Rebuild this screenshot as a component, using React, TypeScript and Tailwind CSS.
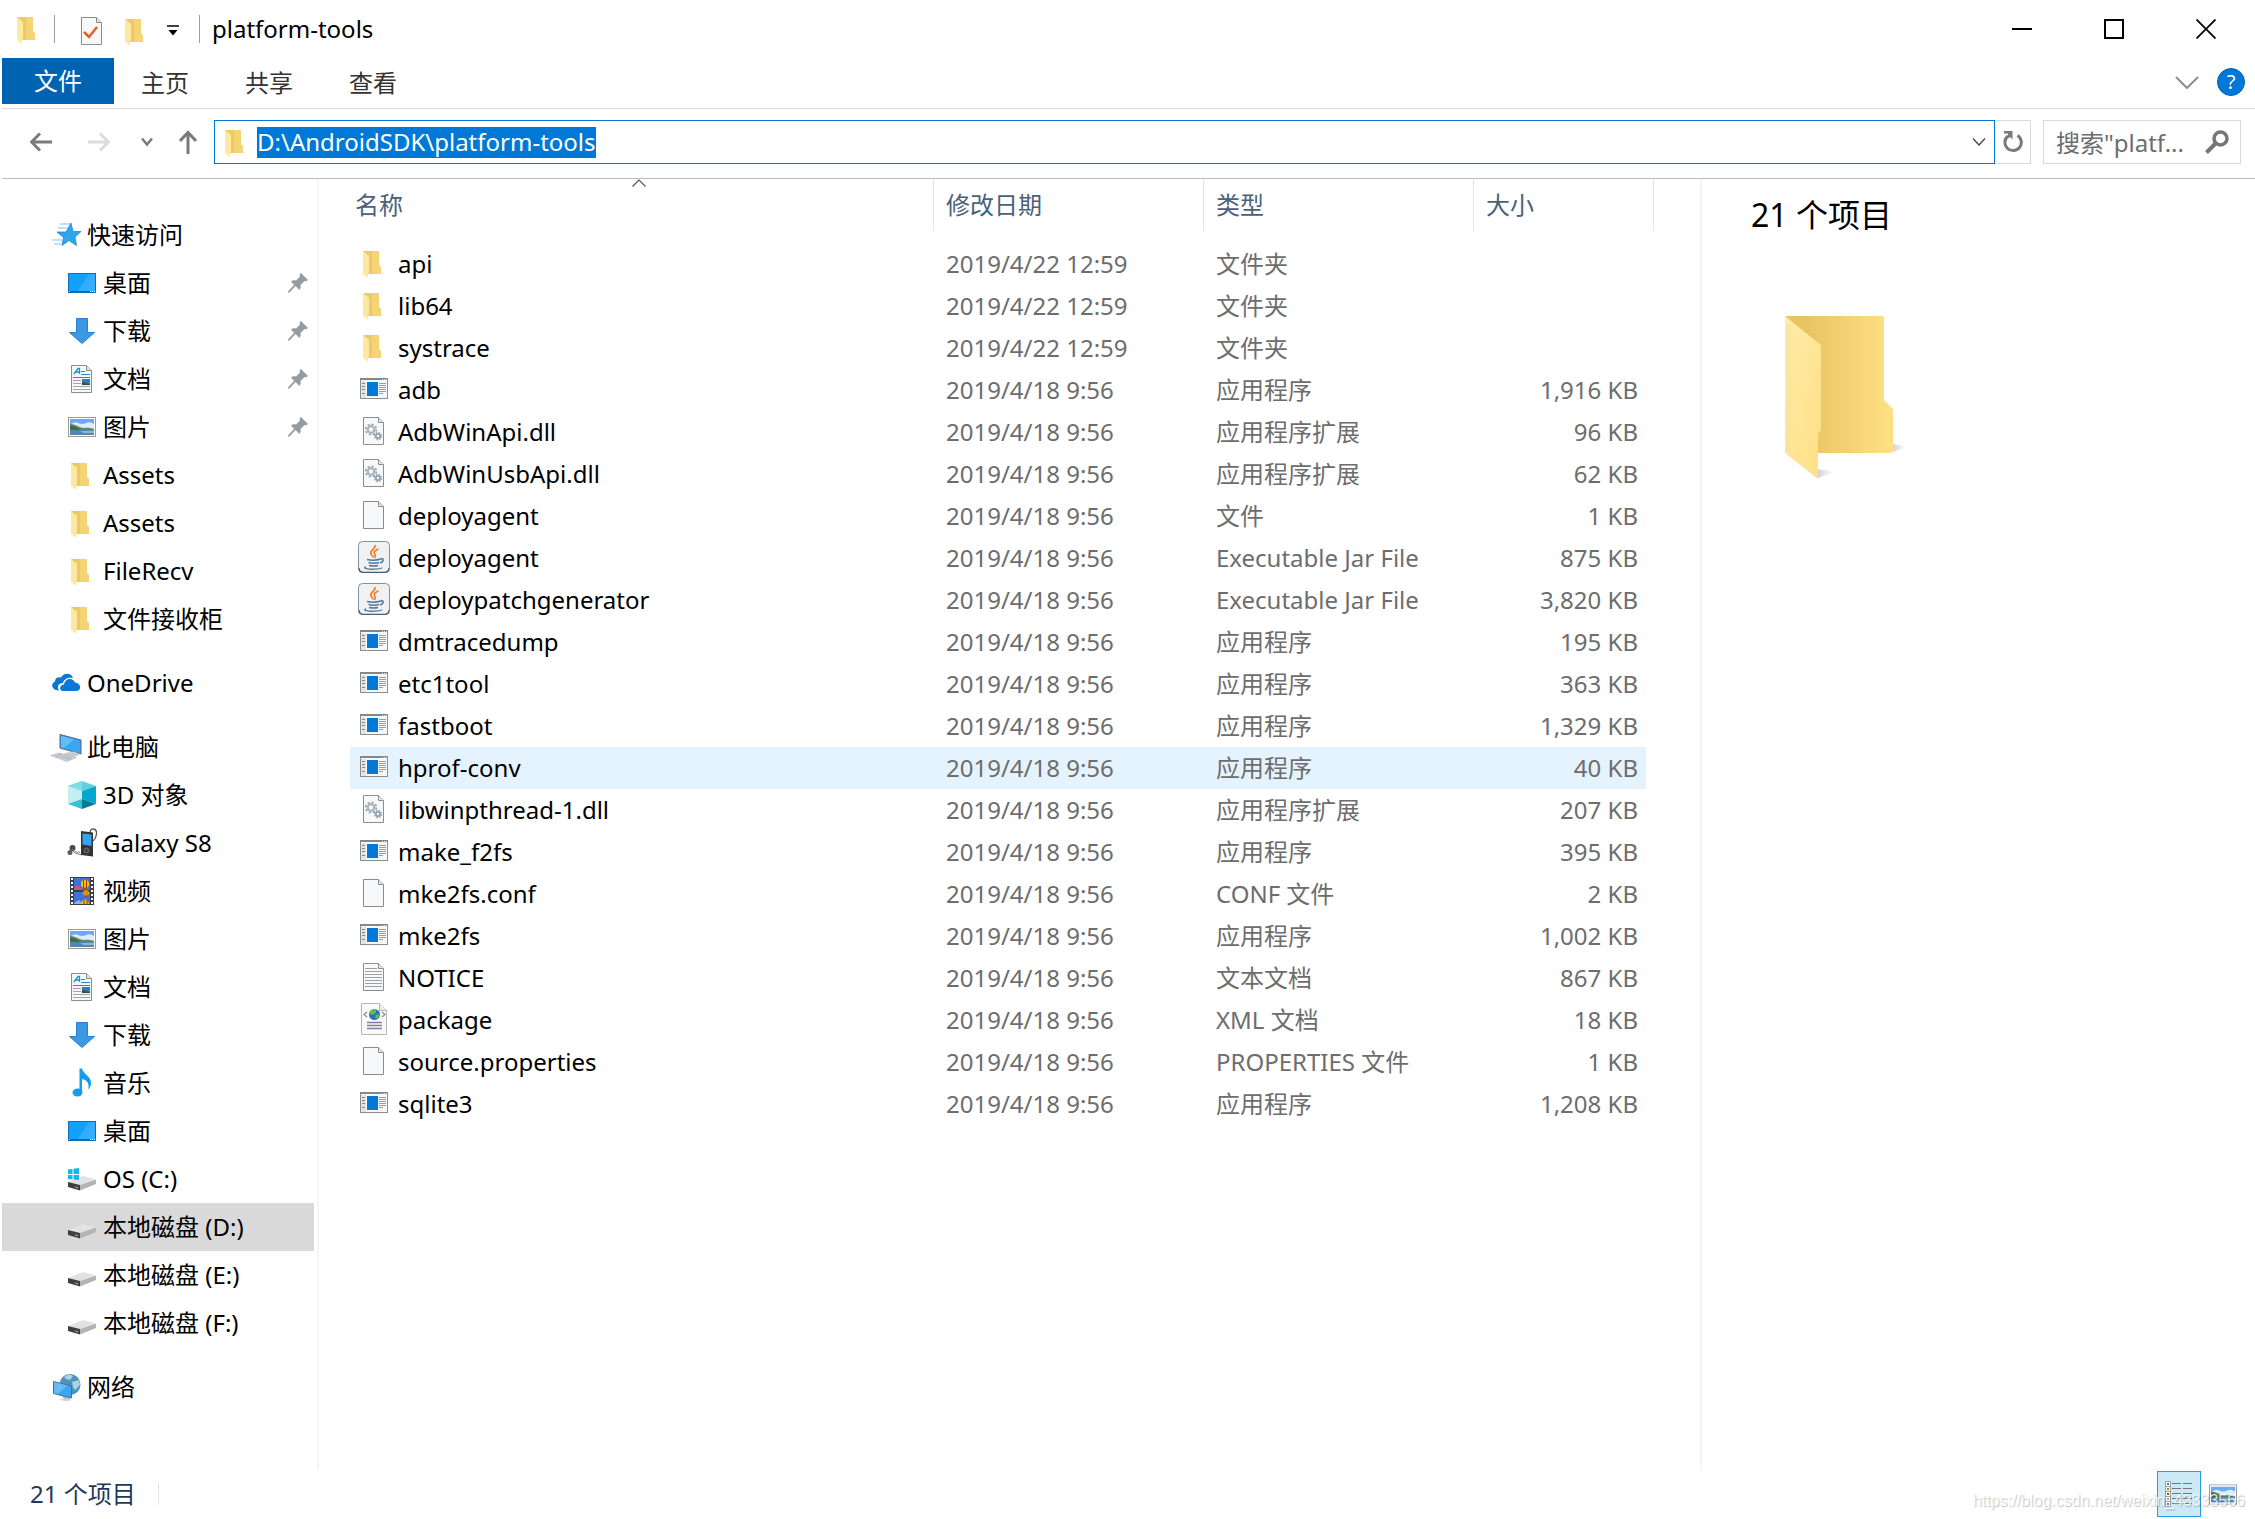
import type { ReactNode } from "react";

type IconName =
  | "star"
  | "desktop"
  | "download"
  | "document"
  | "picture"
  | "folder"
  | "onedrive"
  | "computer"
  | "cube"
  | "player"
  | "video"
  | "music"
  | "osdrive"
  | "drive"
  | "network"
  | "exe"
  | "dll"
  | "file"
  | "jar"
  | "text"
  | "xml";

type NavItem = { icon: IconName; label: string; pinned?: boolean; active?: boolean };
type NavGroup = { icon: IconName; label: string; items: NavItem[] };
type FileRow = { icon: IconName; name: string; date: string; type: string; size: string; hover?: boolean };

const navGroups: NavGroup[] = [
  {
    icon: "star",
    label: "快速访问",
    items: [
      { icon: "desktop", label: "桌面", pinned: true },
      { icon: "download", label: "下载", pinned: true },
      { icon: "document", label: "文档", pinned: true },
      { icon: "picture", label: "图片", pinned: true },
      { icon: "folder", label: "Assets" },
      { icon: "folder", label: "Assets" },
      { icon: "folder", label: "FileRecv" },
      { icon: "folder", label: "文件接收柜" },
    ],
  },
  { icon: "onedrive", label: "OneDrive", items: [] },
  {
    icon: "computer",
    label: "此电脑",
    items: [
      { icon: "cube", label: "3D 对象" },
      { icon: "player", label: "Galaxy S8" },
      { icon: "video", label: "视频" },
      { icon: "picture", label: "图片" },
      { icon: "document", label: "文档" },
      { icon: "download", label: "下载" },
      { icon: "music", label: "音乐" },
      { icon: "desktop", label: "桌面" },
      { icon: "osdrive", label: "OS (C:)" },
      { icon: "drive", label: "本地磁盘 (D:)", active: true },
      { icon: "drive", label: "本地磁盘 (E:)" },
      { icon: "drive", label: "本地磁盘 (F:)" },
    ],
  },
  { icon: "network", label: "网络", items: [] },
];

const files: FileRow[] = [
  { icon: "folder", name: "api", date: "2019/4/22 12:59", type: "文件夹", size: "" },
  { icon: "folder", name: "lib64", date: "2019/4/22 12:59", type: "文件夹", size: "" },
  { icon: "folder", name: "systrace", date: "2019/4/22 12:59", type: "文件夹", size: "" },
  { icon: "exe", name: "adb", date: "2019/4/18 9:56", type: "应用程序", size: "1,916 KB" },
  { icon: "dll", name: "AdbWinApi.dll", date: "2019/4/18 9:56", type: "应用程序扩展", size: "96 KB" },
  { icon: "dll", name: "AdbWinUsbApi.dll", date: "2019/4/18 9:56", type: "应用程序扩展", size: "62 KB" },
  { icon: "file", name: "deployagent", date: "2019/4/18 9:56", type: "文件", size: "1 KB" },
  { icon: "jar", name: "deployagent", date: "2019/4/18 9:56", type: "Executable Jar File", size: "875 KB" },
  { icon: "jar", name: "deploypatchgenerator", date: "2019/4/18 9:56", type: "Executable Jar File", size: "3,820 KB" },
  { icon: "exe", name: "dmtracedump", date: "2019/4/18 9:56", type: "应用程序", size: "195 KB" },
  { icon: "exe", name: "etc1tool", date: "2019/4/18 9:56", type: "应用程序", size: "363 KB" },
  { icon: "exe", name: "fastboot", date: "2019/4/18 9:56", type: "应用程序", size: "1,329 KB" },
  { icon: "exe", name: "hprof-conv", date: "2019/4/18 9:56", type: "应用程序", size: "40 KB", hover: true },
  { icon: "dll", name: "libwinpthread-1.dll", date: "2019/4/18 9:56", type: "应用程序扩展", size: "207 KB" },
  { icon: "exe", name: "make_f2fs", date: "2019/4/18 9:56", type: "应用程序", size: "395 KB" },
  { icon: "file", name: "mke2fs.conf", date: "2019/4/18 9:56", type: "CONF 文件", size: "2 KB" },
  { icon: "exe", name: "mke2fs", date: "2019/4/18 9:56", type: "应用程序", size: "1,002 KB" },
  { icon: "text", name: "NOTICE", date: "2019/4/18 9:56", type: "文本文档", size: "867 KB" },
  { icon: "xml", name: "package", date: "2019/4/18 9:56", type: "XML 文档", size: "18 KB" },
  { icon: "file", name: "source.properties", date: "2019/4/18 9:56", type: "PROPERTIES 文件", size: "1 KB" },
  { icon: "exe", name: "sqlite3", date: "2019/4/18 9:56", type: "应用程序", size: "1,208 KB" },
];

// blank sheet with a folded corner, shared by the file type icons
const sheet = (
  <>
    <path d="M5.5 2.5H20.5L25.5 7.5V29.5H5.5Z" fill="#f7f8f9" stroke="#8c8c8c" />
    <path d="M20.5 2.5V7.5H25.5" fill="#e6e6e6" stroke="#8c8c8c" />
  </>
);

const drive = (
  <>
    <path d="M2 19L17 13L30 16.5L14 22Z" fill="#e2e2e5" />
    <path d="M14 22L30 16.5V21L14 27.5Z" fill="#b4b4b6" />
    <path d="M2 19L14 22V27.5L2 24Z" fill="#3c3f3e" />
    <path d="M9 23.2L12 24V25.4L9 24.6Z" fill="#3fd54a" />
  </>
);

const landscape = (
  <>
    <rect x="4" y="8" width="24" height="16" fill="#6fa8f5" />
    <path d="M4 14Q8 10 12 12T20 12T28 13V18H4Z" fill="#dcecfb" />
    <path d="M4 13C9 13 13 16 17 17C21 16.500 25 17 28 18V19H4Z" fill="#5d8a68" />
    <path d="M4 14L10 16L15 19H4Z" fill="#3f6a4b" />
    <rect x="4" y="19" width="24" height="5" fill="#4f87b5" />
    <path d="M14 20H28V22H18Z" fill="#8fbad6" />
    <rect x="2.500" y="6.500" width="27" height="19" fill="none" stroke="#9b9b9b" />
    <rect x="3.500" y="7.500" width="25" height="17" fill="none" stroke="#fff" />
  </>
);

const balloon = (
  <>
    <ellipse cx="0" cy="0" rx="4" ry="4.200" fill="#f3c400" />
    <path d="M-1.500 -4V4M1.500 -4V4" stroke="#9b2d1e" strokeWidth="1" />
    <path d="M-2.500 3.500H2.500L1 6H-1Z" fill="#c23a2a" />
  </>
);

const icons: Record<IconName, ReactNode> = {
  star: (
    <>
      <path d="M21 4L23 12.500H31L25 18L26.500 26.500L19 21.500L12 26.500L13.500 18.500L7 13H16Z" fill="#2ea4ec" stroke="#2b86c5" strokeWidth="0.800" />
      <path d="M10 5H20M8 9H18M2 21H12M4 25H11" stroke="#7cc3ee" strokeWidth="1.200" />
    </>
  ),
  desktop: (
    <>
      <rect x="2.500" y="6.500" width="27" height="19" fill="#12a0ff" stroke="#0a6fb8" />
      <path d="M29 7V24H12L23 7Z" fill="#33adff" />
      <path d="M3 24.500H24" stroke="#0a63a5" />
      <path d="M3 24.500H4M24 24.500H29" stroke="#fff" strokeDasharray="1 1" />
    </>
  ),
  download: <path d="M10.500 3.500H21.500V17.500H28.500L16 28.500L3.500 17.500H10.500Z" fill="#3c97e6" stroke="#2a7fd0" />,
  document: (
    <>
      {sheet}
      <path d="M8 11L12 5.500H13.500V11M9.500 9H13" stroke="#1b8fd8" strokeWidth="1.300" fill="none" />
      <path d="M15 8.500H19M15 11.500H24M7 14.500H24" stroke="#1b8fd8" />
      <rect x="16" y="16" width="8" height="6" fill="#3b78b4" />
      <path d="M16 19L24 21V22H16Z" fill="#2e5548" />
      <path d="M7 17.500H15M7 20.500H15M7 23.500H24M7 26.500H24" stroke="#a5a5a5" />
    </>
  ),
  picture: landscape,
  folder: (
    <>
      <path d="M5 4H21V18L23 20V27H10Z" fill="#f5d474" />
      <path d="M5 4H14V27H10Z" fill="#ecca68" />
      <path d="M5 4L11 9V25L10 27V31L5 27Z" fill="#ffe9a2" />
      <path d="M23 26L25 26L23 27Z" fill="#ddd" />
    </>
  ),
  onedrive: (
    <>
      <path d="M8 23.500C2 23 0 17 5 14.500C5 11 8 9.500 11 10.500C13 6 21 5 23 11C18 10 14 12 13 16C8 16 7 20 9 23.500Z" fill="#0a78d4" />
      <path d="M13 24C9 24 9 18 14 17.500C15 11 23 10 25 15.500C31 16 32 23 27 24Z" fill="#0a78d4" />
    </>
  ),
  computer: (
    <>
      <path d="M10 3.500L31 9V23L10 17Z" fill="#3aa5f0" stroke="#56687a" />
      <path d="M11 5L24 8.500L14 17L11 16.500Z" fill="#63bbf8" />
      <path d="M14 22L24 20.500L30 23L26 25.500H17Z" fill="#c5cdd4" />
      <path d="M1 24.500L9 22L26 26.500L17 30.500Z" fill="#d8dde1" stroke="#9aa4ad" strokeWidth="0.600" />
      <path d="M5 24.500L20 28.500M8 23.500L22 27.500M6 26L12 23M11 27.500L17 25M15 29L21 26" stroke="#9aa4ad" strokeWidth="0.600" />
    </>
  ),
  cube: (
    <>
      <path d="M16 2L30 7L16 12L2 7Z" fill="#5fd0dc" />
      <path d="M16 2L2 7L16 12Z" fill="#7edde5" />
      <path d="M2 7L16 12V22L2 25Z" fill="#c4eff1" />
      <path d="M16 12L30 7V25L16 20Z" fill="#05a6cf" />
      <path d="M2 25L16 20V30Z" fill="#36c2d3" />
      <path d="M16 20L30 25L16 30Z" fill="#077c96" />
    </>
  ),
  player: (
    <>
      <path d="M24 6C24 0 31 1 30.500 7C30 12 28 13 27 14" stroke="#555" strokeWidth="1.300" fill="none" />
      <path d="M15 4L27 5.500V29.500L15 28Z" fill="#333" />
      <path d="M16.500 6.500L25.500 7.500V19L16.500 17.500Z" fill="#37a2f2" />
      <circle cx="20.500" cy="23.500" r="3" fill="#5c5c5c" />
      <circle cx="20.500" cy="23.500" r="1" fill="#2b2b2b" />
      <circle cx="6.500" cy="21" r="3" fill="#4a4a4a" />
      <circle cx="4" cy="25.500" r="2.500" fill="#5a5a5a" />
      <path d="M7 24C10 28 12 26 15 28M6 22C9 24 10 26 14 25" stroke="#777" fill="none" />
    </>
  ),
  video: (
    <>
      <rect x="4" y="2" width="24" height="28" fill="#3d3f44" />
      <path d="M6 3V29M26 3V29" stroke="#fff" strokeWidth="2" strokeDasharray="2 2" />
      <rect x="8" y="3" width="16" height="12" fill="#3f72d8" />
      <rect x="8" y="17" width="16" height="12" fill="#3f72d8" />
      <path d="M8 14L11 10L14 12L16 15H8Z" fill="#e0506a" />
      <path d="M8 28L13 25L17 29H8Z" fill="#7fb4ef" />
      <g transform="translate(19 9)">{balloon}</g>
      <g transform="translate(20 18) scale(.7)">{balloon}</g>
      <path d="M15 29C15 23 23 23 23 29Z" fill="#f3c400" />
      <path d="M18 25V29M21 25V29" stroke="#9b2d1e" />
    </>
  ),
  music: (
    <>
      <path d="M13.500 1.500H16C17 7 25 9 25 16C25 19 24 21 22 22.500C24 17 21 13 16 12V25H13.500Z" fill="#129cf2" />
      <ellipse cx="11.500" cy="25.500" rx="5" ry="4" fill="#129cf2" />
    </>
  ),
  osdrive: (
    <>
      {drive}
      <path d="M2 6.500L6.500 6V11H2ZM7.500 5.800L13 5V11H7.500ZM2 12H6.500V16.500L2 16ZM7.500 12H13V17L7.500 16.500Z" fill="#12b7f0" />
    </>
  ),
  drive,
  network: (
    <>
      <circle cx="20" cy="13.500" r="10.500" fill="#4f93b8" />
      <path d="M14 6Q19 2 23 5L20 9L16 8ZM22 11L29 9L30 14L25 19L23 16Z" fill="#a9d3e4" />
      <path d="M12 24.500L20 26.500V29L14 28.500Z" fill="#b6bfc6" />
      <path d="M9 28.500Q15 31 22 29L18 27.500Z" fill="#ccd3d8" />
      <path d="M3.500 10.500L21.500 15V27L3.500 22.500Z" fill="#3ba6f1" stroke="#4b6f8a" />
      <path d="M4 11L17 14.500L8 23L4 22Z" fill="#63bbf8" />
    </>
  ),
  exe: (
    <>
      <rect x="2.500" y="5.500" width="27" height="20" fill="#f7f8f9" stroke="#8a8d91" />
      <path d="M2 6H30" stroke="#83868a" strokeWidth="2" />
      <path d="M24 6.500H29" stroke="#d9d9d9" strokeDasharray="1 1" />
      <path d="M3 8H8V25H3Z" fill="#e3e5e7" />
      <path d="M4 10.500H7M4 13.500H7M4 16.500H7M4 20.500H7" stroke="#83868a" />
      <rect x="9" y="9" width="11" height="14" fill="#0478d7" />
      <path d="M21 10.500H28M21 12.500H28M21 14.500H28M21 16.500H28M21 18.500H28M21 20.500H25" stroke="#9b9da0" />
    </>
  ),
  dll: (
    <>
      {sheet}
      <circle cx="13" cy="14.500" r="3.300" fill="none" stroke="#a9b3bc" strokeWidth="2.200" />
      <circle cx="13" cy="14.500" r="5.300" fill="none" stroke="#93a0aa" strokeWidth="1.600" strokeDasharray="2 2.160" />
      <circle cx="20" cy="21" r="2.200" fill="none" stroke="#93a0aa" strokeWidth="1.800" />
      <circle cx="20" cy="21" r="3.700" fill="none" stroke="#93a0aa" strokeWidth="1.200" strokeDasharray="1.500 1.400" />
    </>
  ),
  file: sheet,
  jar: (
    <>
      <rect x="0.500" y="0.500" width="31" height="31" rx="4" fill="#f0f1f2" stroke="#7b93a8" />
      <path d="M1 27Q1 31 5 31.300H27Q31 31 31 27" fill="none" stroke="#44617a" strokeWidth="1.300" />
      <path d="M17 4C18 8 11 9.500 13 13C13.500 14.500 15 15 15 16.500M20.500 8C16 10 15 11.500 17 13.500C18 15 17 16 16.500 17" fill="none" stroke="#ec7a24" strokeWidth="1.600" />
      <path d="M9 18.500Q16 20 23 18M10.500 21.500Q16 23 21 21.500M11 24.500Q16 25.500 20 24.500M23 17.500C27 17.500 25 21.500 22 22" fill="none" stroke="#54789a" strokeWidth="1.500" />
      <path d="M8 26C4 27 10 28.500 16 28.200C21 28 24 27.500 24 26.500" fill="none" stroke="#54789a" strokeWidth="1.300" />
    </>
  ),
  text: (
    <>
      {sheet}
      <path d="M7 7.500H19M7 10.500H24M7 13.500H24M7 16.500H24M7 19.500H24M7 22.500H24M7 25.500H24" stroke="#a0a0a0" />
    </>
  ),
  xml: (
    <>
      <path d="M3.500 0.500H21.500L28.500 7.500V31.500H3.500Z" fill="#fafafa" stroke="#b5b5b5" />
      <path d="M21.500 0.500V7.500H28.500" fill="#eee" stroke="#b5b5b5" />
      <circle cx="16.500" cy="11.500" r="5.500" fill="#2f6fc9" />
      <path d="M12.500 8Q15.500 5 18.500 7L17.500 10L14.500 12L11.500 11ZM17.500 12L21.500 11L20.500 15L17.500 16Z" fill="#56c53f" />
      <path d="M9 9L6 11.500L9 14M24 9L27 11.500L24 14" fill="none" stroke="#8b8b99" strokeWidth="1.200" />
      <path d="M9 19.500H24M9 22.500H24M9 25.500H24" stroke="#8878a3" strokeWidth="1.300" />
    </>
  ),
};

const Icon = ({ name }: { name: IconName }) => (
  <svg className="size-8 shrink-0" viewBox="0 0 32 32" aria-hidden="true">
    {icons[name]}
  </svg>
);

const Pin = () => (
  <svg className="ml-auto size-5 shrink-0" viewBox="0 0 20 20" aria-hidden="true">
    <path d="M13 0L20 7L18 8.500L16.500 8L12.500 12C13 14 12.500 15.500 11.500 17L7.500 13L1.500 19.500H0V18.500L6 12L3 8.500C4.500 7 6.500 7 8 7.500L12 3.500L11.500 1.500Z" fill="#929ca4" />
  </svg>
);

const TitleBar = () => (
  <header className="flex h-[58px] items-center">
    <div className="flex items-center pl-3">
      <Icon name="folder" />
      <span className="ml-2.5 h-7 w-px bg-[#a0a0a0]" />
      <button type="button" aria-label="属性" className="mt-1 ml-[21px]">
        <svg className="size-8" viewBox="0 0 32 32" aria-hidden="true">
          {sheet}
          <path d="M8 17L13 22L21 12" fill="none" stroke="#f25a1b" strokeWidth="2.500" />
        </svg>
      </button>
      <button type="button" aria-label="新建文件夹" className="mt-1 ml-3">
        <Icon name="folder" />
      </button>
      <button type="button" aria-label="自定义快速访问工具栏" className="mt-1 ml-[15px]">
        <svg className="h-3 w-3" viewBox="0 0 12 12" aria-hidden="true">
          <path d="M0 1H12" stroke="#000" strokeWidth="1.500" />
          <path d="M1.500 5H10.500L6 10.500Z" fill="#000" />
        </svg>
      </button>
      <span className="ml-5 h-7 w-px bg-[#a0a0a0]" />
      <h1 className="ml-3">platform-tools</h1>
    </div>
    <div className="ml-auto flex pr-[3px]">
      <button type="button" aria-label="最小化" className="flex h-[58px] w-[92px] items-center justify-center">
        <svg className="size-5" viewBox="0 0 20 20" aria-hidden="true">
          <path d="M0 10H20" stroke="#000" strokeWidth="2" />
        </svg>
      </button>
      <button type="button" aria-label="最大化" className="flex h-[58px] w-[92px] items-center justify-center">
        <svg className="size-5" viewBox="0 0 20 20" aria-hidden="true">
          <rect x="1" y="1" width="18" height="18" fill="none" stroke="#000" strokeWidth="2" />
        </svg>
      </button>
      <button type="button" aria-label="关闭" className="flex h-[58px] w-[92px] items-center justify-center">
        <svg className="size-5" viewBox="0 0 20 20" aria-hidden="true">
          <path d="M0.500 0.500L19.500 19.500M19.500 0.500L0.500 19.500" stroke="#000" strokeWidth="1.800" />
        </svg>
      </button>
    </div>
  </header>
);

const Ribbon = () => (
  <nav className="ml-0.5 flex h-[51px] border-b border-[#dadbdc] text-[#333]">
    <button type="button" className="mr-[-1px] h-[46px] bg-[#0063b1] px-8 text-white">
      文件
    </button>
    {["主页", "共享", "查看"].map((tab) => (
      <button key={tab} type="button" className="h-[50px] px-7">
        {tab}
      </button>
    ))}
    <div className="ml-auto flex items-center gap-[18px] pr-2.5 pb-0.5">
      <button type="button" aria-label="最小化功能区">
        <svg className="h-3.5 w-6" viewBox="0 0 24 14" aria-hidden="true">
          <path d="M1 2L12 13L23 2" fill="none" stroke="#8c8c8c" strokeWidth="2" />
        </svg>
      </button>
      <button
        type="button"
        aria-label="帮助"
        className="flex size-7 items-center justify-center rounded-full border border-[#0063b1] bg-[#0078d7] text-xl text-white"
      >
        ?
      </button>
    </div>
  </nav>
);

const AddressBar = () => (
  <div className="ml-0.5 flex h-[70px] items-start border-b border-[#bcbcbc] pt-[11px] pr-3.5 pl-7">
    <div className="flex h-11 items-center">
      <button type="button" aria-label="后退">
        <svg className="h-5 w-[22px]" viewBox="0 0 22 20" aria-hidden="true">
          <path d="M22 10H2M10 1.500L1.500 10L10 18.500" fill="none" stroke="#7a7a7a" strokeWidth="3" />
        </svg>
      </button>
      <button type="button" aria-label="前进" className="ml-9">
        <svg className="h-5 w-[22px]" viewBox="0 0 22 20" aria-hidden="true">
          <path d="M0 10H20M12 1.500L20.500 10L12 18.500" fill="none" stroke="#dcdcdc" strokeWidth="3" />
        </svg>
      </button>
      <button type="button" aria-label="最近浏览的位置" className="ml-[31px]">
        <svg className="h-2.5 w-3" viewBox="0 0 12 10" aria-hidden="true">
          <path d="M1 1.500L6 7.500L11 1.500" fill="none" stroke="#7a7a7a" strokeWidth="2.500" />
        </svg>
      </button>
      <button type="button" aria-label="上移" className="ml-[26px]">
        <svg className="h-6 w-[18px]" viewBox="0 0 18 24" aria-hidden="true">
          <path d="M9 24V3M1 11L9 2.500L17 11" fill="none" stroke="#7a7a7a" strokeWidth="3" />
        </svg>
      </button>
    </div>
    <div className="ml-[17px] flex h-11 flex-1 items-center border border-[#0078d7] pr-2 pl-[5px]">
      <Icon name="folder" />
      <input
        aria-label="地址"
        defaultValue="D:\AndroidSDK\platform-tools"
        className="ml-[5px] field-sizing-content h-[31px] bg-[#0078d7] text-white outline-none"
      />
      <button type="button" aria-label="以前的位置" className="ml-auto">
        <svg className="h-2.5 w-3.5" viewBox="0 0 14 10" aria-hidden="true">
          <path d="M1 1.500L7 8L13 1.500" fill="none" stroke="#444" strokeWidth="1.300" />
        </svg>
      </button>
    </div>
    <button type="button" aria-label="刷新" className="flex h-11 w-9 items-center justify-center border border-l-0 border-[#d9d9d9]">
      <svg className="h-6 w-5" viewBox="0 0 20 24" aria-hidden="true">
        <path d="M14.500 5.500A8.200 8.200 0 1 1 5 6" fill="none" stroke="#7a7a7a" strokeWidth="3" />
        <path d="M1 1H9.500V9.500L7 7L5 8.500V3.500H1Z" fill="#7a7a7a" />
      </svg>
    </button>
    <div className="ml-3 flex h-11 w-[198px] items-center border border-[#d9d9d9] pr-[11px] pl-3">
      <input
        type="text"
        aria-label="搜索"
        placeholder={'搜索"platf...'}
        className="h-9 w-0 flex-1 outline-none placeholder:text-[#6d6d6d]"
      />
      <svg className="size-6 shrink-0" viewBox="0 0 24 24" aria-hidden="true">
        <circle cx="15.500" cy="8.500" r="6.500" fill="none" stroke="#757575" strokeWidth="3.500" />
        <path d="M10.500 13.500L1.500 22.500" stroke="#757575" strokeWidth="4" />
      </svg>
    </div>
  </div>
);

const Sidebar = () => (
  <aside className="flex w-[319px] shrink-0 flex-col gap-4 border-r-2 border-[#f5f5f5] pt-8 pr-[3px] pl-0.5">
    {navGroups.map((group) => (
      <div key={group.label}>
        <a href="#" className="flex h-12 items-center gap-[5px] pl-12">
          <Icon name={group.icon} />
          {group.label}
        </a>
        {group.items.map((item, i) => (
          <a
            key={i}
            href="#"
            className={`flex h-12 items-center gap-[5px] pr-1.5 pl-16 ${item.active ? "bg-[#d9d9d9]" : ""}`}
          >
            <Icon name={item.icon} />
            {item.label}
            {item.pinned && <Pin />}
          </a>
        ))}
      </div>
    ))}
  </aside>
);

const FileTable = () => (
  <main className="min-w-0 flex-1 pl-[31px]">
    <table className="w-[1304px] table-fixed">
      <colgroup>
        <col className="w-[584px]" />
        <col className="w-[270px]" />
        <col className="w-[270px]" />
        <col className="w-[172px]" />
        <col className="w-2" />
      </colgroup>
      <thead className="text-left text-[#4c607a]">
        <tr className="h-16 align-top">
          <th className="relative p-0 font-normal">
            <div className="flex h-[52px] items-center border-r border-[#e5e5e5] pl-[5px]">名称</div>
            <svg className="absolute top-0 left-[282px] h-2 w-3.5" viewBox="0 0 14 8" aria-hidden="true">
              <path d="M0.500 7.500L7 1L13.500 7.500" fill="none" stroke="#555" strokeWidth="1.200" />
            </svg>
          </th>
          <th className="p-0 font-normal">
            <div className="flex h-[52px] items-center border-r border-[#e5e5e5] pl-3">修改日期</div>
          </th>
          <th className="p-0 font-normal">
            <div className="flex h-[52px] items-center border-r border-[#e5e5e5] pl-3">类型</div>
          </th>
          <th colSpan={2} className="p-0 font-normal">
            <div className="flex h-[52px] items-center border-r border-[#e5e5e5] pl-3">大小</div>
          </th>
        </tr>
      </thead>
      <tbody className="text-[#6d6d6d]">
        {files.map((file, i) => {
          const bg = file.hover ? "bg-[#e5f3ff]" : "";
          return (
            <tr key={i} className="h-[42px] leading-[42px]">
              <td className={`p-0 pl-2 ${bg}`}>
                <div className="flex items-center gap-2 text-black">
                  <span className="pb-0.5">
                    <Icon name={file.icon} />
                  </span>
                  {file.name}
                </div>
              </td>
              <td className={`p-0 pl-3 ${bg}`}>{file.date}</td>
              <td className={`p-0 pl-3 ${bg}`}>{file.type}</td>
              <td className={`p-0 pr-2 text-right ${bg}`}>{file.size}</td>
            </tr>
          );
        })}
      </tbody>
    </table>
  </main>
);

const PreviewPane = () => (
  <section className="w-[555px] shrink-0 border-l-2 border-[#f5f5f5] pl-[49px]">
    <h2 className="pt-3.5 text-[32px] leading-[44px]">21 个项目</h2>
    <svg className="mt-[79px] ml-[34px] h-[164px] w-[124px]" viewBox="0 0 124 164" aria-hidden="true">
      <defs>
        <linearGradient id="folderBack" x1="0.2" x2="1" y1="0" y2="0">
          <stop offset="0" stopColor="#e9c463" />
          <stop offset="1" stopColor="#ffe184" />
        </linearGradient>
        <linearGradient id="folderFront" x1="0" x2="1" y1="0" y2="1">
          <stop offset="0" stopColor="#ffeba8" />
          <stop offset="1" stopColor="#ffdf86" />
        </linearGradient>
        <linearGradient id="folderShade">
          <stop offset="0" stopColor="#d5d5d5" />
          <stop offset="1" stopColor="#ffffff" />
        </linearGradient>
      </defs>
      <path d="M108 128L122 131L108 136Z" fill="url(#folderShade)" />
      <path d="M33 153L50 156L33 162Z" fill="url(#folderShade)" />
      <path d="M0 0H97Q99 0 99 2V84L108 93V135Q108 137 106 137H33Z" fill="url(#folderBack)" />
      <path d="M0 0L36 29V114L33 118V163L0 137Z" fill="url(#folderFront)" />
      <path d="M2.500 8V136M4.500 9V137" stroke="#fadf8d" strokeWidth="0.800" />
    </svg>
  </section>
);

const StatusBar = () => (
  <footer className="flex h-[49px] items-center pr-[18px] pb-px pl-[30px] text-[#1e395b]">
    <span>21 个项目</span>
    <span className="ml-[22px] h-[22px] w-px bg-[#e5e5e5]" />
    <div className="relative ml-auto flex items-center gap-2">
      <button type="button" aria-label="详细信息" className="flex h-[46px] w-11 items-center justify-center border border-[#26a0da] bg-[#cbe8f6]">
        <svg className="h-[26px] w-7" viewBox="0 0 28 26" aria-hidden="true">
          <path d="M0.500 0.500H5.500V25.500H0.500ZM0.500 5.500H5.500M0.500 10.500H5.500M0.500 15.500H5.500M0.500 20.500H5.500" fill="#fff" stroke="#a0a0a0" />
          <path d="M2 3H4M2 23H4" stroke="#3a7fc0" strokeWidth="2" />
          <path d="M2 8H4" stroke="#9a8a2c" strokeWidth="2" />
          <path d="M2 13H4" stroke="#c83a1c" strokeWidth="2" />
          <path d="M2 18H4" stroke="#8fae93" strokeWidth="2" />
          <path d="M7 2.500H16M18 2.500H27M7 7.500H16M18 7.500H27M7 12.500H16M18 12.500H27M7 17.500H16M18 17.500H27M7 22.500H16M18 22.500H27" stroke="#777" />
        </svg>
      </button>
      <button type="button" aria-label="大缩略图">
        <svg className="h-[21px] w-7" viewBox="2 6 28 20" aria-hidden="true">
          {landscape}
        </svg>
      </button>
      <span className="pointer-events-none absolute -right-2 bottom-1 font-['Liberation_Sans',sans-serif] text-base text-white/80 [text-shadow:1px_1px_1px_#00000040]">
        https://blog.csdn.net/weixin_43333566
      </span>
    </div>
  </footer>
);

export default function App() {
  return (
    <div className="flex min-h-screen flex-col bg-white font-['Noto_Sans','Noto_Sans_CJK_SC',sans-serif] text-2xl text-black">
      <TitleBar />
      <Ribbon />
      <AddressBar />
      <div className="flex flex-1">
        <Sidebar />
        <FileTable />
        <PreviewPane />
      </div>
      <StatusBar />
    </div>
  );
}
